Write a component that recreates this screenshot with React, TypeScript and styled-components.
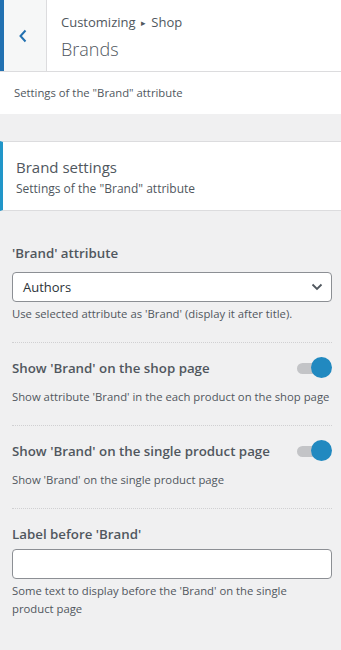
import React from "react";
import styled, { createGlobalStyle } from "styled-components";

const GlobalStyle = createGlobalStyle`
  html, body {
    margin: 0;
    padding: 0;
    background: #f0f0f1;
  }
  body {
    font-family: "Open Sans", "Noto Sans", sans-serif;
    color: #50575e;
  }
  * {
    box-sizing: border-box;
  }
`;

const App = () => {
  return (
    <Panel>
      <GlobalStyle />
      <Header>
        <BackButton aria-label="Back">
          <svg width="10" height="14" viewBox="0 0 10 14">
            <path d="M7.5 1.5 L2.5 7 L7.5 12.5" fill="none" stroke="#2271b1" strokeWidth="2" />
          </svg>
        </BackButton>
        <HeaderTitle>
          <Breadcrumb>
            Customizing <Arrow>▸</Arrow> Shop
          </Breadcrumb>
          <PageTitle>Brands</PageTitle>
        </HeaderTitle>
      </Header>
      <PanelDescription>Settings of the "Brand" attribute</PanelDescription>

      <SectionCard>
        <SectionTitle>Brand settings</SectionTitle>
        <SectionDescription>Settings of the "Brand" attribute</SectionDescription>
      </SectionCard>

      <Controls>
        <Control>
          <ControlTitle $gap={9}>'Brand' attribute</ControlTitle>
          <SelectBox>
            <span>Authors</span>
            <svg width="12" height="8" viewBox="0 0 12 8">
              <path d="M1.5 1.5 L6 6 L10.5 1.5" fill="none" stroke="#50575e" strokeWidth="1.8" />
            </svg>
          </SelectBox>
          <Description>Use selected attribute as 'Brand' (display it after title).</Description>
        </Control>

        <Control $separated>
          <ToggleRow>
            <ControlTitle>Show 'Brand' on the shop page</ControlTitle>
            <Toggle />
          </ToggleRow>
          <Description $spaced $nowrap>
            Show attribute 'Brand' in the each product on the shop page
          </Description>
        </Control>

        <Control $separated>
          <ToggleRow>
            <ControlTitle>Show 'Brand' on the single product page</ControlTitle>
            <Toggle />
          </ToggleRow>
          <Description $spaced>Show 'Brand' on the single product page</Description>
        </Control>

        <Control $separated>
          <ControlTitle $gap={5}>Label before 'Brand'</ControlTitle>
          <TextInput type="text" />
          <Description $maxWidth={295}>
            Some text to display before the 'Brand' on the single product page
          </Description>
        </Control>
      </Controls>
    </Panel>
  );
};

export default App;

const Panel = styled.div`
  width: 341px;
  min-height: 650px;
  background: #f0f0f1;
`;

const Header = styled.div`
  display: flex;
  height: 72px;
  background: #fff;
  border-bottom: 1px solid #dcdcde;
`;

const BackButton = styled.div`
  width: 47px;
  display: flex;
  align-items: center;
  justify-content: center;
  padding-right: 4px;
  background: #f6f7f7;
  border-left: 4px solid #2271b1;
  border-right: 1px solid #dcdcde;
`;

const HeaderTitle = styled.div`
  padding: 12px 0 0 14px;
`;

const Breadcrumb = styled.div`
  font-size: 13px;
  line-height: 20px;
  color: #50575e;
`;

const Arrow = styled.span`
  font-size: 9px;
  position: relative;
  top: -1px;
  margin: 0 2px;
`;

const PageTitle = styled.div`
  font-size: 18px;
  font-weight: 300;
  line-height: 26px;
  margin-top: 2px;
  color: #50575e;
`;

const PanelDescription = styled.div`
  background: #fff;
  height: 42px;
  padding: 13px 14px 0;
  font-size: 11.3px;
  line-height: 16px;
  color: #50575e;
`;

const SectionCard = styled.div`
  margin-top: 27px;
  height: 70px;
  background: #fff;
  border-top: 1px solid #dcdcde;
  border-bottom: 1px solid #dcdcde;
  border-left: 3px solid #2196c9;
  padding: 15px 0 0 13px;
`;

const SectionTitle = styled.div`
  font-size: 15px;
  line-height: 20px;
  color: #50575e;
`;

const SectionDescription = styled.div`
  margin-top: 4px;
  font-size: 12px;
  line-height: 16px;
  color: #50575e;
`;

const Controls = styled.div`
  padding: 32px 9px 0 12px;
`;

const Control = styled.div<{ $separated?: boolean }>`
  padding-top: ${(p) => (p.$separated ? "15px" : "0")};
  padding-bottom: 19px;
  border-top: ${(p) => (p.$separated ? "1px dotted #d0d0d2" : "none")};
`;

const ControlTitle = styled.div<{ $gap?: number }>`
  font-size: 13.3px;
  font-weight: 600;
  line-height: 20px;
  color: #50575e;
  margin-bottom: ${(p) => p.$gap ?? 0}px;
`;

const ToggleRow = styled.div`
  display: flex;
  justify-content: space-between;
  align-items: flex-start;
`;

const Toggle = styled.div`
  position: relative;
  width: 35px;
  height: 22px;
  flex-shrink: 0;
  margin-top: -1px;

  &::before {
    content: "";
    position: absolute;
    left: 0;
    top: 6px;
    width: 28px;
    height: 11px;
    border-radius: 6px;
    background: #c3c4c7;
  }

  &::after {
    content: "";
    position: absolute;
    right: 0;
    top: 0;
    width: 21px;
    height: 21px;
    border-radius: 50%;
    background: #2189c0;
  }
`;

const SelectBox = styled.div`
  display: flex;
  align-items: center;
  justify-content: space-between;
  height: 30px;
  padding: 0 8px 0 10px;
  background: #fff;
  border: 1px solid #8c8f94;
  border-radius: 4px;
  font-size: 13px;
  color: #2c3338;
`;

const TextInput = styled.input`
  display: block;
  width: 100%;
  height: 30px;
  background: #fff;
  border: 1px solid #8c8f94;
  border-radius: 4px;
  font-family: inherit;
`;

const Description = styled.div<{ $spaced?: boolean; $nowrap?: boolean; $maxWidth?: number }>`
  margin-top: ${(p) => (p.$spaced ? "9px" : "3px")};
  font-size: 11.3px;
  line-height: 18px;
  color: #50575e;
  white-space: ${(p) => (p.$nowrap ? "nowrap" : "normal")};
  max-width: ${(p) => (p.$maxWidth ? `${p.$maxWidth}px` : "none")};
`;
